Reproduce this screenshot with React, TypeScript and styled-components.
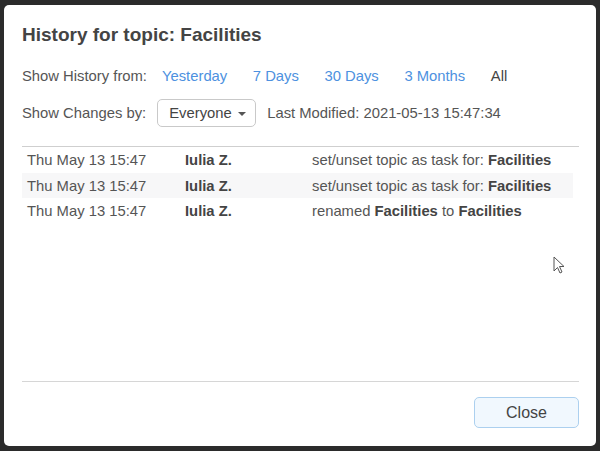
import React from 'react';
import styled, { createGlobalStyle } from 'styled-components';

const Global = createGlobalStyle`
	html, body {
		margin: 0;
		padding: 0;
		background: #2b2b2b;
		font-family: 'Liberation Sans', Arial, sans-serif;
	}
`;

const S = {
	Page: styled.div`
		width: 600px;
		height: 451px;
		box-sizing: border-box;
		padding: 5px 4px 5px 4px;
		position: relative;
	`,

	Dialog: styled.div`
		width: 592px;
		height: 441px;
		box-sizing: border-box;
		background: #fff;
		border-radius: 5px;
		padding: 19px 17px 0 18px;
		display: flex;
		flex-direction: column;
		color: #555;
		font-size: 14.8px;
	`,

	Title: styled.h1`
		margin: 0;
		font-size: 19px;
		line-height: 22px;
		font-weight: bold;
		color: #444;
	`,

	FilterRow: styled.div`
		display: flex;
		align-items: center;
		height: 20px;
		line-height: 20px;
		margin-top: 20px;
	`,

	ChangesRow: styled.div`
		display: flex;
		align-items: center;
		height: 28px;
		line-height: 20px;
		margin-top: 13px;
	`,

	Label: styled.span<{ $gap: number }>`
		margin-right: ${(p) => p.$gap}px;
	`,

	Range: styled.span<{ $active?: boolean }>`
		padding: 0 12.8px;
		color: ${(p) => (p.$active ? '#444' : '#4d91e0')};
		cursor: pointer;
	`,

	Dropdown: styled.div`
		box-sizing: border-box;
		height: 28px;
		width: 99px;
		border: 1px solid #c9c9c9;
		border-radius: 5px;
		display: flex;
		align-items: center;
		padding-left: 11px;
		gap: 6px;
		color: #444;
		margin-right: 11px;
	`,

	Caret: styled.span`
		width: 0;
		height: 0;
		border-left: 4px solid transparent;
		border-right: 4px solid transparent;
		border-top: 4px solid #555;
		margin-top: 1px;
	`,

	Table: styled.div`
		margin-top: 19px;
		border-top: 1px solid #cfcfcf;
		flex: 1;
		padding-right: 6px;
	`,

	Row: styled.div<{ $striped?: boolean }>`
		display: grid;
		grid-template-columns: 158px 127px 1fr;
		height: 25.5px;
		line-height: 26px;
		background: ${(p) => (p.$striped ? '#f7f7f8' : 'transparent')};
	`,

	Cell: styled.div<{ $bold?: boolean }>`
		padding-left: 5px;
		white-space: nowrap;
		font-weight: ${(p) => (p.$bold ? 'bold' : 'normal')};
		color: ${(p) => (p.$bold ? '#444' : '#555')};

		b {
			color: #444;
		}
	`,

	Footer: styled.div`
		border-top: 1px solid #d6d6d6;
		padding: 15px 0 18px;
		display: flex;
		justify-content: flex-end;
	`,

	Button: styled.button`
		box-sizing: border-box;
		width: 105px;
		height: 31px;
		border: 1px solid #acd0ef;
		border-radius: 5px;
		background: #f1f8fe;
		color: #444;
		font-family: inherit;
		font-size: 16px;
	`,

	Cursor: styled.svg`
		position: absolute;
		left: 553px;
		top: 256px;
	`,
};

const rows = [
	{ date: 'Thu May 13 15:47', who: 'Iulia Z.', what: <>set/unset topic as task for: <b>Facilities</b></> },
	{ date: 'Thu May 13 15:47', who: 'Iulia Z.', what: <>set/unset topic as task for: <b>Facilities</b></> },
	{ date: 'Thu May 13 15:47', who: 'Iulia Z.', what: <>renamed <b>Facilities</b> to <b>Facilities</b></> },
];

function App() {
	return (
		<S.Page>
			<Global />
			<S.Dialog>
				<S.Title>History for topic: Facilities</S.Title>
				<S.FilterRow>
					<S.Label $gap={2.2}>Show History from:</S.Label>
					<S.Range>Yesterday</S.Range>
					<S.Range>7 Days</S.Range>
					<S.Range>30 Days</S.Range>
					<S.Range>3 Months</S.Range>
					<S.Range $active>All</S.Range>
				</S.FilterRow>
				<S.ChangesRow>
					<S.Label $gap={11}>Show Changes by:</S.Label>
					<S.Dropdown>
						Everyone <S.Caret />
					</S.Dropdown>
					<span>Last Modified: 2021-05-13 15:47:34</span>
				</S.ChangesRow>
				<S.Table>
					{rows.map((r, i) => (
						<S.Row key={i} $striped={i % 2 === 1}>
							<S.Cell>{r.date}</S.Cell>
							<S.Cell $bold>{r.who}</S.Cell>
							<S.Cell>{r.what}</S.Cell>
						</S.Row>
					))}
				</S.Table>
				<S.Footer>
					<S.Button>Close</S.Button>
				</S.Footer>
			</S.Dialog>
			<S.Cursor width="13" height="19" viewBox="0 0 13 19">
				<path
					d="M1 1 L1 15 L4.5 11.5 L7 17 L9 16 L6.5 10.5 L11 10.5 Z"
					fill="#fff"
					stroke="#555"
					strokeWidth="1"
					strokeLinejoin="round"
				/>
			</S.Cursor>
		</S.Page>
	);
}

export default App;
